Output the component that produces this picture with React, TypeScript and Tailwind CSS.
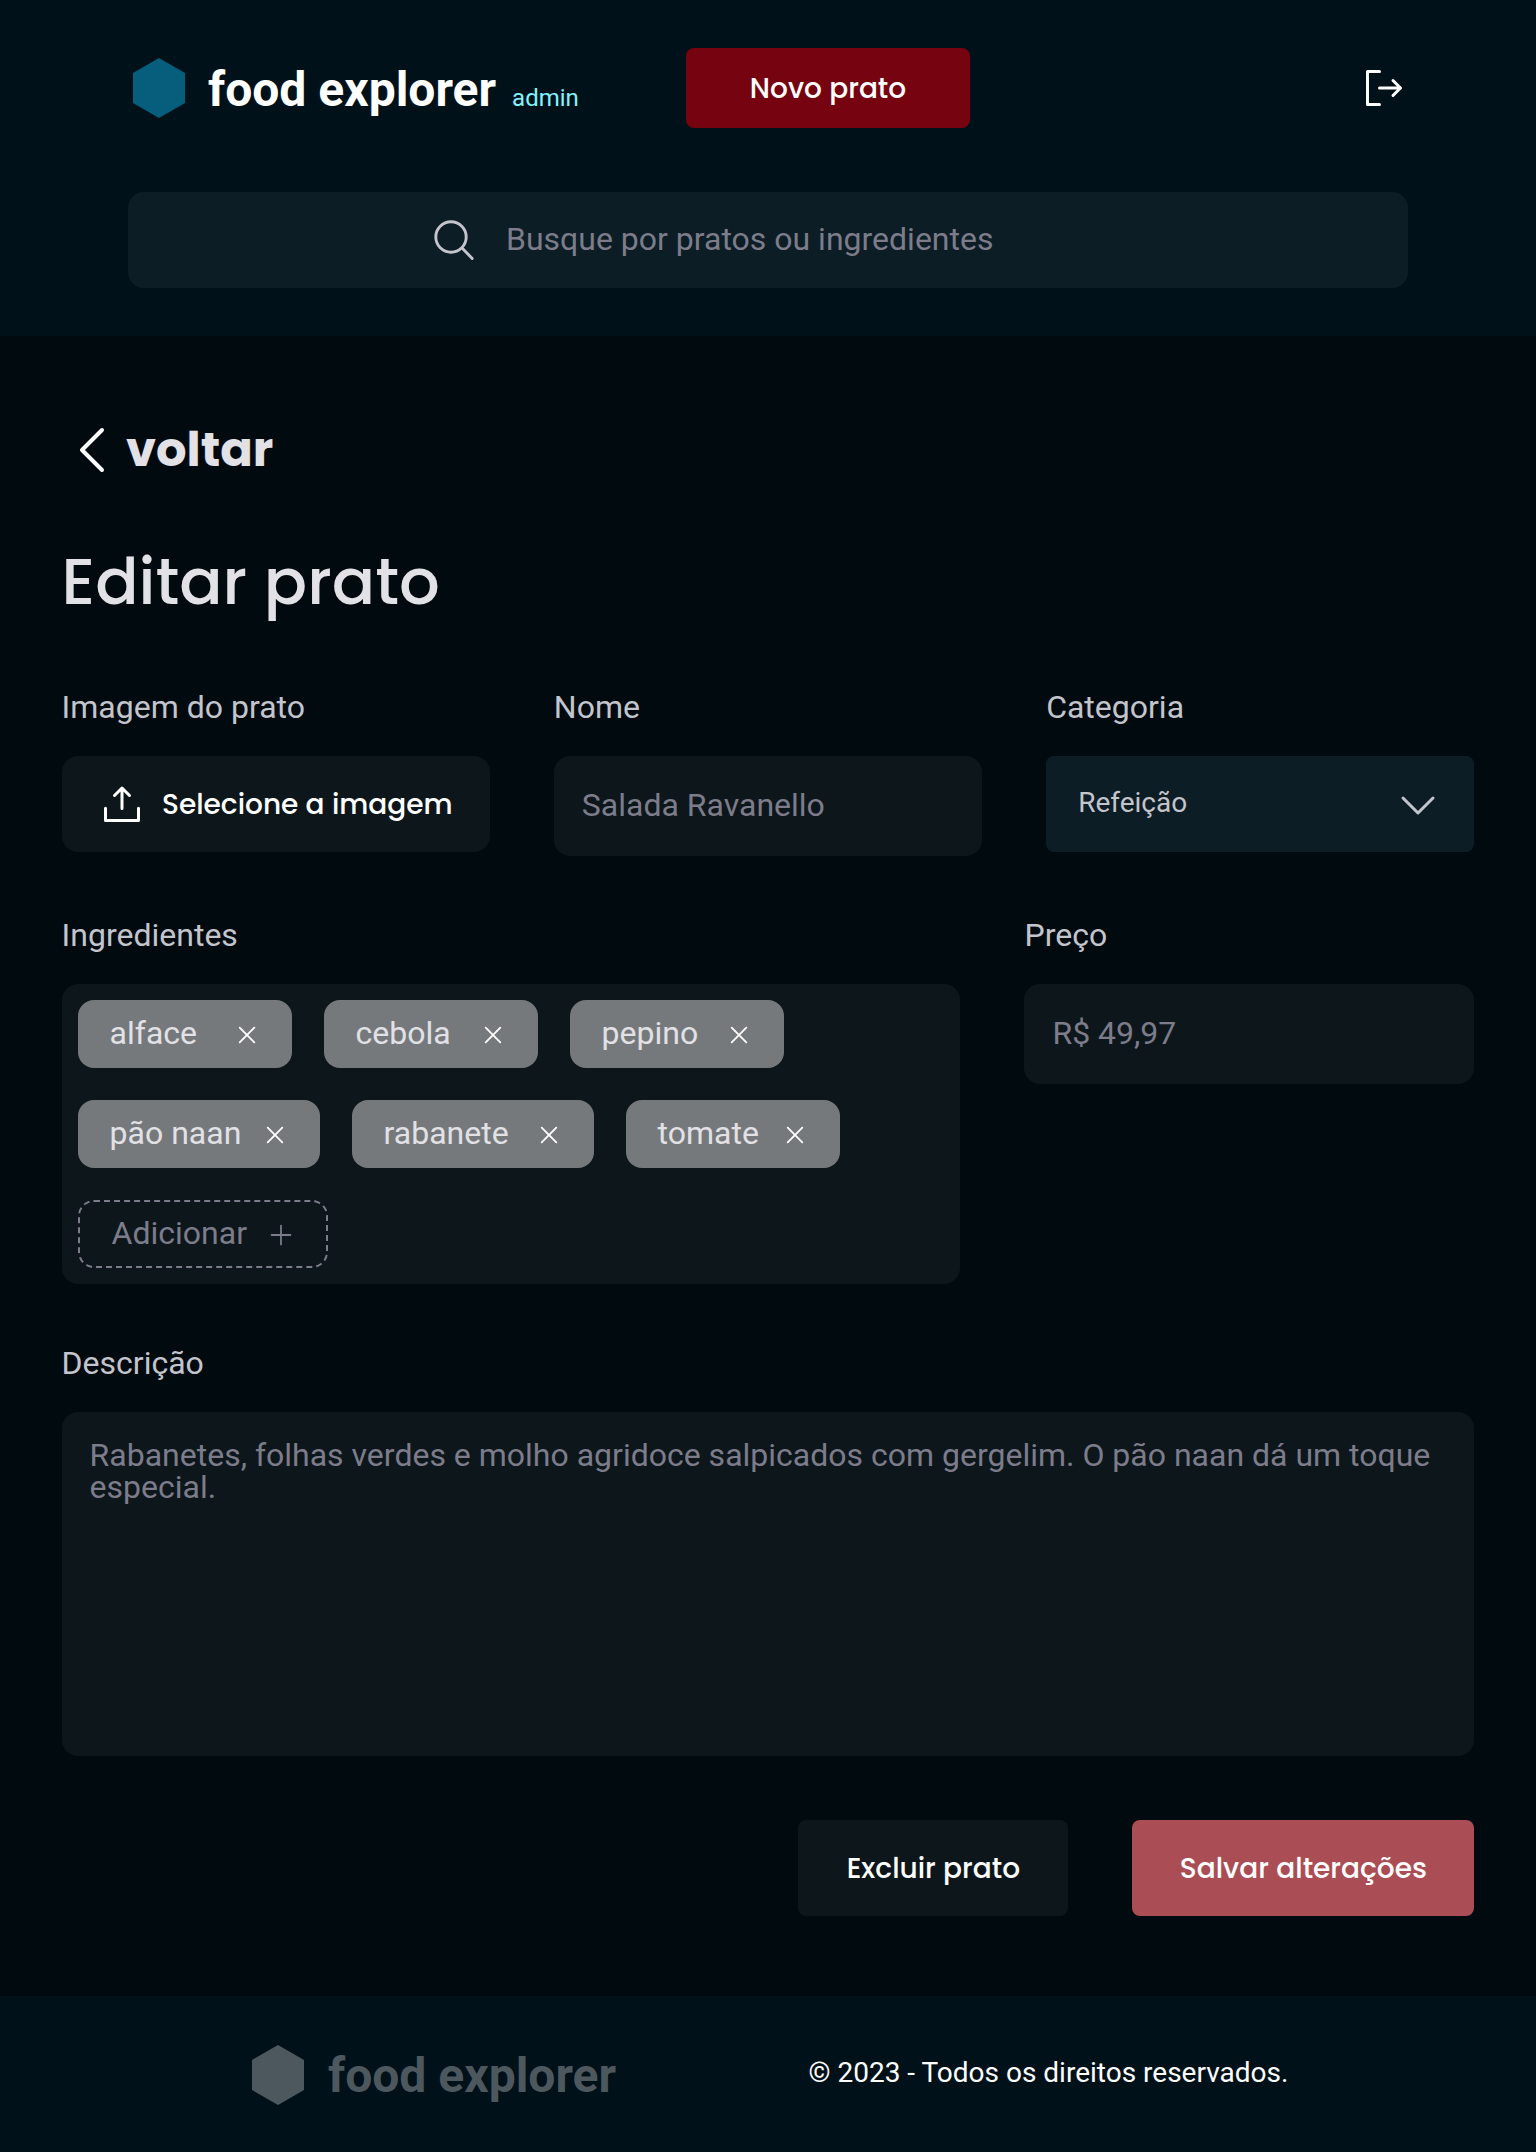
import type { ReactNode } from "react";

const poppins = "font-['Poppins','Inter',sans-serif]";

function Hexagon({ className }: { className: string }) {
  return (
    <svg width="52" height="60" viewBox="0 0 52 60" className={`shrink-0 fill-current ${className}`}>
      <polygon points="26,0 52,15 52,45 26,60 0,45 0,15" />
    </svg>
  );
}

function Icon({ d, size = 48, stroke = 3, className = "" }: { d: string; size?: number; stroke?: number; className?: string }) {
  return (
    <svg
      width={size}
      height={size}
      viewBox={`0 0 ${size} ${size}`}
      fill="none"
      stroke="currentColor"
      strokeWidth={stroke}
      strokeLinecap="round"
      strokeLinejoin="round"
      className={`shrink-0 ${className}`}
    >
      <path d={d} />
    </svg>
  );
}

function Field({ label, className = "", children }: { label: string; className?: string; children: ReactNode }) {
  return (
    <div className={className}>
      <div className="mb-[33px] text-[32px] leading-8 text-[#c4c4cc]">{label}</div>
      {children}
    </div>
  );
}

function Chip({ name, className }: { name: string; className: string }) {
  return (
    <div className={`flex h-[68px] items-center justify-between rounded-2xl bg-[#76797b] px-8 text-[#e1e1e6] ${className}`}>
      <span className="pb-[2px] leading-8 whitespace-nowrap">{name}</span>
      <Icon size={26} stroke={1.8} d="M5.7 5.7 20.3 20.3M20.3 5.7 5.7 20.3" className="mt-[2px] text-white" />
    </div>
  );
}

export default function App() {
  return (
    <div className="flex h-[2152px] w-[1536px] flex-col bg-[#000a0f] font-['Roboto',sans-serif] text-[32px]">
      <header className="h-[336px] bg-[#001119] px-32 pt-12">
        <div className="flex h-20 items-center">
          <div className="flex w-[558px] items-center gap-[23px] pl-[5px]">
            <Hexagon className="text-[#065e7c]" />
            <div className="flex items-baseline gap-4 pt-[3px] leading-[48px]">
              <span className="text-5xl leading-[48px] font-bold text-white">food explorer</span>
              <span className="text-2xl leading-6 text-[#82f3ff]">admin</span>
            </div>
          </div>
          <button className={`h-20 w-[284px] rounded-lg bg-[#750310] pt-[2px] text-[28px] leading-7 font-medium text-white ${poppins}`}>
            Novo prato
          </button>
          <Icon d="M19.5 7.5H7.5V40.5H19.5M19.5 24H40.5M33 16.5 40.5 24 33 31.5" className="ml-auto text-white" />
        </div>
        <div className="mt-16 flex h-24 items-center gap-7 rounded-2xl bg-[#0d1d25] pl-[302px]">
          <Icon stroke={2.9} d="M36.2 21A15.2 15.2 0 1 1 5.8 21A15.2 15.2 0 1 1 36.2 21M31.8 31.8 42.2 42.4" className="text-[#c4c4cc]" />
          <span className="pb-[2px] leading-8 text-[#7c7c8a]">Busque por pratos ou ingredientes</span>
        </div>
      </header>

      <main className="px-[61.6px] pt-[90px] pb-20">
        <div className="flex h-12 items-center gap-[10px] pl-[6.4px]">
          <Icon stroke={4} d="M34 4 14 24 34 44" className="text-white" />
          <span className={`pb-px text-5xl leading-[48px] font-bold text-[#e1e1e6] ${poppins}`}>voltar</span>
        </div>
        <h1 className={`mt-[76px] text-[64px] leading-[64px] font-medium text-[#e1e1e6] ${poppins}`}>Editar prato</h1>

        <div className="mt-[77px] grid grid-cols-3 gap-16">
          <Field label="Imagem do prato">
            <div className="flex h-24 items-center gap-4 rounded-2xl bg-[#0d161b] pl-[36.4px] text-white">
              <Icon d="M7.5 28.2V40.5H40.5V28.2M24 28.5V8M16.5 15.5 24 8 31.5 15.5" />
              <span className={`pt-[2px] text-[28px] leading-7 font-medium whitespace-nowrap ${poppins}`}>Selecione a imagem</span>
            </div>
          </Field>
          <Field label="Nome">
            <div className="flex h-[100px] items-center rounded-2xl bg-[#0d161b] px-7 pb-[2px] leading-8 text-[#7c7c8a]">Salada Ravanello</div>
          </Field>
          <Field label="Categoria">
            <div className="flex h-24 items-center justify-between rounded-lg bg-[#0d1d25] px-8 text-[#c4c4cc]">
              <span className="pb-[3px] text-[28px] leading-7">Refeição</span>
              <Icon d="M9 18 24 33 39 18" />
            </div>
          </Field>
        </div>

        <div className="mt-[63px] grid grid-cols-3 gap-16">
          <Field label="Ingredientes" className="col-span-2 mr-[22px]">
            <div className="flex h-[300px] flex-wrap content-start gap-8 rounded-2xl bg-[#0d161b] p-4">
              <Chip name="alface" className="w-[214px]" />
              <Chip name="cebola" className="w-[214px]" />
              <Chip name="pepino" className="w-[214px]" />
              <Chip name="pão naan" className="w-[242px]" />
              <Chip name="rabanete" className="w-[242px]" />
              <Chip name="tomate" className="w-[214px]" />
              <div className="flex h-[68px] w-[250px] items-center justify-between rounded-2xl border-2 border-dashed border-[#7c7c8a] px-8 text-[#7c7c8a]">
                <span className="pb-[2px] leading-8">Adicionar</span>
                <Icon size={26} stroke={1.8} d="M13 3.6V22.4M3.6 13H22.4" className="mt-[2px]" />
              </div>
            </div>
          </Field>
          <Field label="Preço" className="-ml-[21.7px]">
            <div className="flex h-[100px] items-center rounded-2xl bg-[#0d161b] px-7 pb-[2px] leading-8 text-[#7c7c8a]">R$ 49,97</div>
          </Field>
        </div>

        <Field label="Descrição" className="mt-[63px]">
          <div className="h-[344px] rounded-2xl bg-[#0d161b] px-7 pt-[27px] leading-8 text-[#7c7c8a]">
            Rabanetes, folhas verdes e molho agridoce salpicados com gergelim. O pão naan dá um toque especial.
          </div>
        </Field>

        <div className={`mt-16 flex justify-end gap-16 text-[28px] leading-7 font-medium text-white ${poppins}`}>
          <button className="h-24 w-[270px] rounded-lg bg-[#0d161b] pt-[2px]">Excluir prato</button>
          <button className="h-24 w-[342px] rounded-lg bg-[#ab4d55] pt-[2px]">Salvar alterações</button>
        </div>
      </main>

      <footer className="flex h-[156px] items-center bg-[#001119] pl-[252px]">
        <Hexagon className="mt-[2px] text-[#4d585e]" />
        <span className="ml-6 w-[288px] pt-[3px] text-5xl leading-[48px] font-bold whitespace-nowrap text-[#4d585e]">food explorer</span>
        <span className="ml-[192.5px] pb-[2px] text-[28px] leading-7 text-white">© 2023 - Todos os direitos reservados.</span>
      </footer>
    </div>
  );
}
